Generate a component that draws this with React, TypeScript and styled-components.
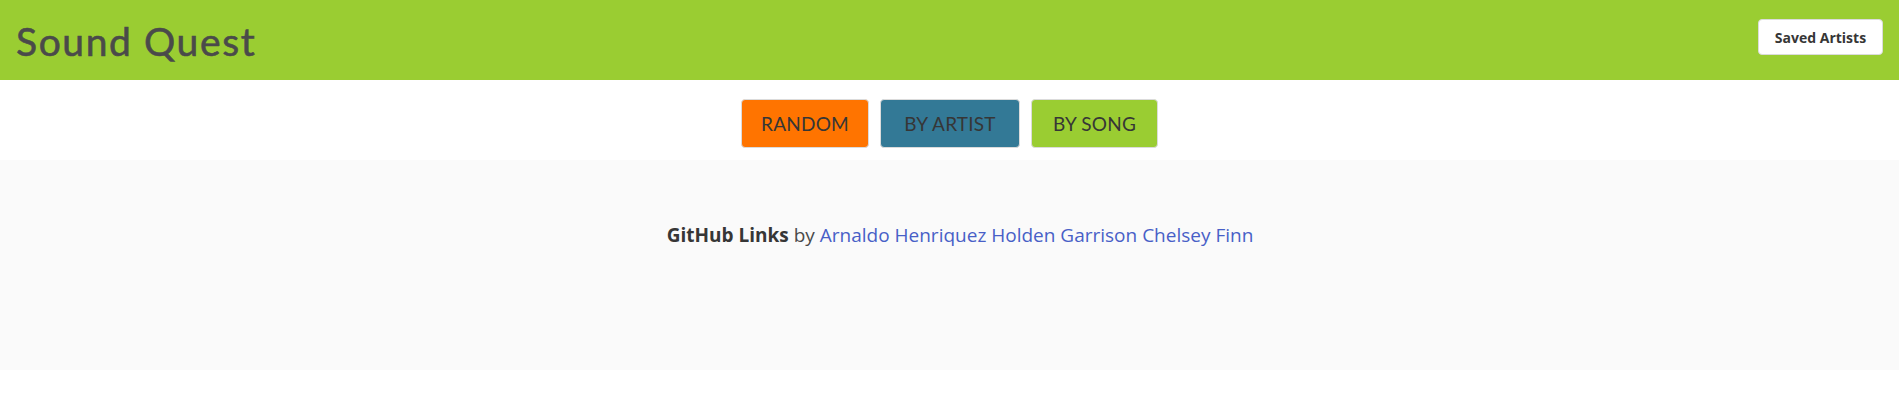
import React from "react";
import styled, { createGlobalStyle } from "styled-components";

const Global = createGlobalStyle`
  html, body { margin: 0; padding: 0; background: #fff; }
  body { font-family: "Open Sans", "Noto Sans", sans-serif; color: #4a4a4a; }
  * { box-sizing: border-box; }
`;

const Header = styled.header`
  height: 80px;
  background: #9acd32;
  display: flex;
  align-items: center;
  justify-content: space-between;
  padding: 0 16px;
`;

const Title = styled.h1`
  margin: 0;
  font-family: "Lato", "Noto Sans", sans-serif;
  font-weight: 400;
  font-size: 39px;
  color: #4a4a4a;
  letter-spacing: 1.6px;
  -webkit-text-stroke: 0.6px #4a4a4a;
  transform: translateY(1px);
`;

const SavedButton = styled.button`
  height: 36px;
  width: 125px;
  margin-top: -6px;
  background: #fff;
  border: 1px solid #dbdbdb;
  border-radius: 4px;
  font-family: "Open Sans", "Noto Sans", sans-serif;
  font-weight: 700;
  font-size: 14px;
  color: #363636;
  cursor: pointer;
  padding: 0;
`;

const ModeBar = styled.nav`
  display: flex;
  justify-content: center;
  gap: 11px;
  padding: 19px 0 12px;
`;

const ModeButton = styled.button<{ $bg: string; $w: number }>`
  height: 49px;
  width: ${(p) => p.$w}px;
  background: ${(p) => p.$bg};
  border: 1px solid #dbdbdb;
  border-radius: 4px;
  font-family: "Lato", "Noto Sans", sans-serif;
  font-size: 19px;
  font-weight: 400;
  letter-spacing: 0.2px;
  color: #363636;
  padding: 0;
  cursor: pointer;
`;

const Footer = styled.footer`
  background: #fafafa;
  height: 210px;
  padding: 60px 24px 120px 45px;
  text-align: center;
  font-size: 19px;
  line-height: 30px;
  font-family: "Open Sans", "Noto Sans", sans-serif;
  color: #4a4a4a;
`;

const Credits = styled.p`
  margin: 0;
`;

const Strong = styled.strong`
  color: #363636;
  font-weight: 700;
`;

const Link = styled.a`
  color: #485fc7;
  text-decoration: none;
`;

export default function App() {
  return (
    <>
      <Global />
      <Header>
        <Title>Sound Quest</Title>
        <SavedButton>Saved Artists</SavedButton>
      </Header>
      <ModeBar>
        <ModeButton $bg="#ff7400" $w={128}>RANDOM</ModeButton>
        <ModeButton $bg="#337996" $w={140}>BY ARTIST</ModeButton>
        <ModeButton $bg="#9acd32" $w={127}>BY SONG</ModeButton>
      </ModeBar>
      <Footer>
        <Credits>
          <Strong>GitHub Links</Strong> by{" "}
          <Link href="#">Arnaldo Henriquez</Link>{" "}
          <Link href="#">Holden Garrison</Link>{" "}
          <Link href="#">Chelsey Finn</Link>
        </Credits>
      </Footer>
    </>
  );
}
